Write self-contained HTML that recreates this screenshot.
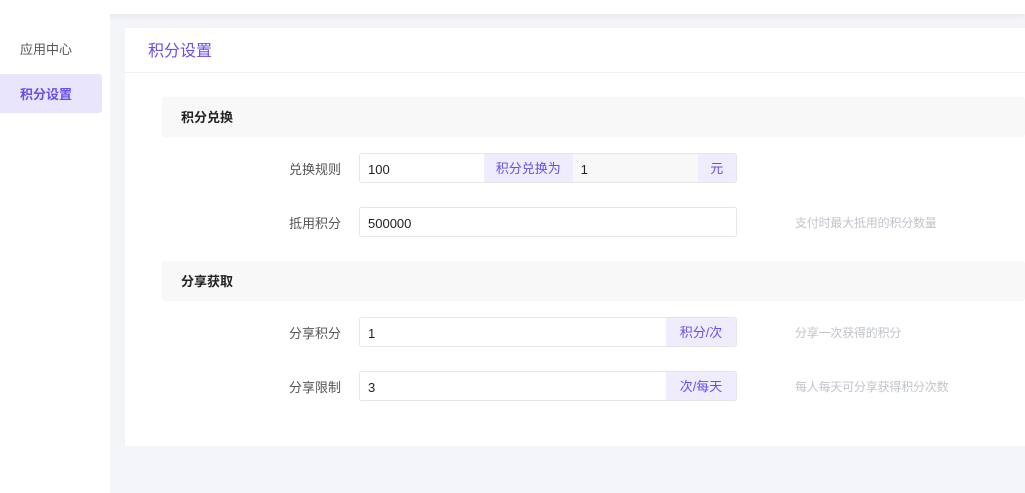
<!DOCTYPE html>
<html><head><meta charset="utf-8"><style>
*{margin:0;padding:0;box-sizing:border-box}
body{width:1025px;height:493px;background:#f4f5f9;font-family:"Liberation Sans","Noto Sans CJK SC",sans-serif;position:relative;overflow:hidden;font-size:13px;color:#333}
.top{position:absolute;left:0;top:0;width:1025px;height:14px;background:#fff;box-shadow:0 2px 6px rgba(0,0,0,.06)}
.side{position:absolute;left:0;top:14px;width:110px;height:479px;background:#fff}
.it{position:absolute;left:0;width:102px;height:39px;line-height:39px;padding-left:20px;font-size:13px;color:#555}
.act{background:#e9e5fd;color:#6a4df0;font-weight:bold;border-radius:0 3px 3px 0}
.card{position:absolute;left:125px;top:28px;width:900px;height:418px;background:#fff}
.title{height:45px;border-bottom:1px solid #f0f0f0;line-height:47px;padding-left:23px;font-size:16px;color:#6a4df0}
.sec{position:absolute;left:37px;width:863px;height:40px;background:#f8f8f8;line-height:42px;padding-left:19px;font-weight:bold;font-size:13px;color:#222;border-radius:3px}
.lab{position:absolute;width:100px;left:116px;text-align:right;font-size:13px;color:#555;line-height:30px}
.grp{position:absolute;left:234px;width:378px;height:30px;display:flex;border:1px solid #e6e6e6;border-radius:3px;overflow:hidden}
.in{flex:1;padding-left:8px;line-height:31px;font-size:13px;color:#222;background:#fff}
.ad{background:#efecfd;color:#6a4df0;line-height:29px;text-align:center;font-size:13px}
.hint{position:absolute;left:670px;font-size:12px;color:#c0c4cc;line-height:32px;letter-spacing:-0.2px}
</style></head><body>
<div class="top"></div>
<div class="side">
<div class="it" style="top:16px">应用中心</div>
<div class="it act" style="top:60px;line-height:41px">积分设置</div>
</div>
<div class="card">
<div class="title">积分设置</div>
<div class="sec" style="top:69px">积分兑换</div>
<div class="lab" style="top:127px">兑换规则</div>
<div class="grp" style="top:125px"><div class="in" style="flex:0 0 124px">100</div><div class="ad" style="width:90px">积分兑换为</div><div class="in" style="flex:0 0 125px;background:#f8f8f8">1</div><div class="ad" style="width:39px">元</div></div>
<div class="lab" style="top:181px">抵用积分</div>
<div class="grp" style="top:179px"><div class="in">500000</div></div>
<div class="hint" style="top:179px">支付时最大抵用的积分数量</div>
<div class="sec" style="top:233px">分享获取</div>
<div class="lab" style="top:291px">分享积分</div>
<div class="grp" style="top:289px"><div class="in">1</div><div class="ad" style="width:70px">积分/次</div></div>
<div class="hint" style="top:289px">分享一次获得的积分</div>
<div class="lab" style="top:345px">分享限制</div>
<div class="grp" style="top:343px"><div class="in">3</div><div class="ad" style="width:70px">次/每天</div></div>
<div class="hint" style="top:343px">每人每天可分享获得积分次数</div>
</div>
</body></html>
